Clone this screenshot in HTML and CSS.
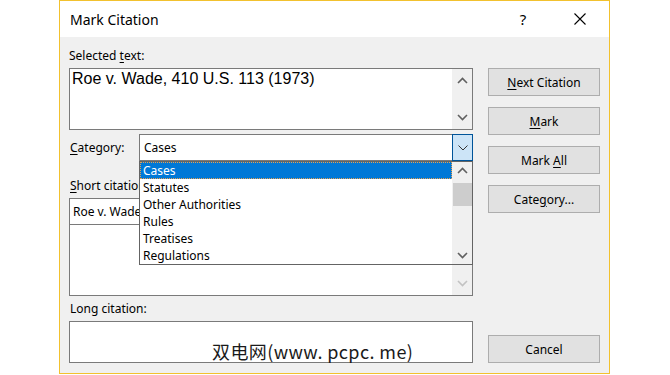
FILE: index.html
```html
<!DOCTYPE html>
<html lang="en">
<head>
  <meta charset="UTF-8" />
  <title>Mark Citation</title>
  <link rel="stylesheet" href="styles.css">
</head>
<body>
  <div class="dialog">
    <div class="titlebar">
      <span class="title">Mark Citation</span>
      <span class="help">?</span>
      <span class="close">
        <svg width="12" height="12" viewBox="0 0 12 12"><path d="M0.5 0.5 L11.5 11.5 M11.5 0.5 L0.5 11.5" stroke="#000" stroke-width="1.1" fill="none"/></svg>
      </span>
    </div>
    <div class="content">
      <div class="main">
        <div class="label">Selected <u>t</u>ext:</div>
        <div class="textbox selected">
          <div class="big-text">Roe v. Wade, 410 U.S. 113 (1973)</div>
          <div class="vscroll">
            <span class="arrow"><svg width="11" height="7" viewBox="0 0 11 7"><polyline points="1,6 5.5,1.5 10,6" stroke="#606060" stroke-width="1.6" fill="none"/></svg></span>
            <span class="arrow"><svg width="11" height="7" viewBox="0 0 11 7"><polyline points="1,1 5.5,5.5 10,1" stroke="#606060" stroke-width="1.6" fill="none"/></svg></span>
          </div>
        </div>

        <div class="category-row">
          <span class="label cat-label"><u>C</u>ategory:</span>
          <div class="combo">
            <span class="combo-value">Cases</span>
            <span class="combo-btn"><svg width="10" height="6" viewBox="0 0 10 6"><polyline points="0.5,0.5 5,5 9.5,0.5" stroke="#333" stroke-width="1" fill="none"/></svg></span>
            <div class="dropdown">
              <ul class="options">
                <li class="active">Cases</li>
                <li>Statutes</li>
                <li>Other Authorities</li>
                <li>Rules</li>
                <li>Treatises</li>
                <li>Regulations</li>
              </ul>
              <div class="vscroll list-scroll">
                <span class="arrow"><svg width="11" height="7" viewBox="0 0 11 7"><polyline points="1,6 5.5,1.5 10,6" stroke="#606060" stroke-width="1.6" fill="none"/></svg></span>
                <span class="thumb"></span>
                <span class="arrow"><svg width="11" height="7" viewBox="0 0 11 7"><polyline points="1,1 5.5,5.5 10,1" stroke="#606060" stroke-width="1.6" fill="none"/></svg></span>
              </div>
            </div>
          </div>
        </div>

        <div class="label short-label"><u>S</u>hort citation:</div>
        <div class="short-edit">Roe v. Wade, 410 U.S. 113 (1973)</div>
        <div class="short-list">
          <div class="list-body"></div>
          <div class="vscroll">
            <span class="arrow"><svg width="11" height="7" viewBox="0 0 11 7"><polyline points="1,1 5.5,5.5 10,1" stroke="#c2c2c2" stroke-width="1.6" fill="none"/></svg></span>
          </div>
        </div>

        <div class="label long-label">Long citation:</div>
        <div class="textbox long">
          <span class="watermark">双电网(www. pcpc. me)</span>
        </div>
      </div>

      <div class="buttons">
        <button><u>N</u>ext Citation</button>
        <button><u>M</u>ark</button>
        <button>Mark <u>A</u>ll</button>
        <button>Cate<u>g</u>ory...</button>
        <div class="spacer"></div>
        <button>Cancel</button>
      </div>
    </div>
  </div>
</body>
</html>
```

FILE: styles.css
```css
body {
  margin: 0;
  background: #fff;
  font-family: "Noto Sans", "Open Sans", sans-serif;
  font-size: 12px;
  color: #000;
}
.dialog {
  margin-left: 59px;
  width: 549px;
  height: 372px;
  border: 1px solid #f2c12e;
  display: flex;
  flex-direction: column;
}
.titlebar {
  height: 37px;
  background: #fff;
  display: flex;
  align-items: center;
}
.title {
  font-size: 14px;
  margin-left: 10px;
  flex: 1;
}
.help { font-size: 15px; width: 20px; margin-right: 41px; text-align: center; }
.close { width: 12px; margin-right: 23px; display: flex; }

.content {
  flex: 1;
  background: #f0f0f0;
  display: flex;
  gap: 15px;
  padding: 11px 9px 10px 9px;
}
.main {
  width: 404px;
  display: flex;
  flex-direction: column;
}
.label { line-height: 16px; height: 16px; }
u { text-decoration-thickness: 1px; text-underline-offset: 2px; }

.textbox {
  border: 1px solid #7a7a7a;
  background: #fff;
  box-sizing: border-box;
  margin-top: 4px;
}
.selected {
  height: 62px;
  display: flex;
}
.big-text {
  flex: 1;
  font-family: "Liberation Sans", Arial, sans-serif;
  font-size: 16px;
  line-height: 18px;
  padding: 1px 0 0 2px;
}
.vscroll {
  width: 20px;
  background: #f0f0f0;
  display: flex;
  flex-direction: column;
  justify-content: space-between;
  align-items: center;
}
.arrow {
  height: 17px;
  display: flex;
  align-items: center;
  justify-content: center;
}
.selected .vscroll { padding: 3px 0; }

.category-row {
  display: flex;
  align-items: center;
  margin-top: 4px;
  height: 27px;
}
.cat-label { width: 70px; flex-shrink: 0; box-sizing: border-box; line-height: 27px; height: 27px; padding-left: 1px; }
.combo {
  position: relative;
  flex: 1;
  height: 27px;
  box-sizing: border-box;
  border: 1px solid #7a7a7a;
  background: #fff;
  display: flex;
  align-items: center;
}
.combo-value { flex: 1; padding-left: 4px; }
.combo-btn {
  width: 19px;
  height: 25px;
  background: #cce4f7;
  border: 1px solid #005499;
  margin: -1px -1px -1px 0;
  display: flex;
  align-items: center;
  justify-content: center;
}
.dropdown {
  position: absolute;
  left: -1px;
  right: -1px;
  top: 26px;
  height: 104px;
  box-sizing: border-box;
  border: 1px solid #646464;
  background: #fff;
  display: flex;
  z-index: 2;
}
.options {
  list-style: none;
  margin: 0;
  padding: 0;
  flex: 1;
}
.options li {
  height: 17px;
  line-height: 17px;
  padding-left: 3px;
}
.options li.active {
  background: #0078d7;
  color: #fff;
  outline: 1px dotted #e8a050;
  outline-offset: -1px;
}
.list-scroll { justify-content: flex-start; }
.thumb {
  width: 19px;
  height: 23px;
  background: #cdcdcd;
  margin-top: 4px;
  margin-bottom: auto;
}

.short-label { margin-top: 17px; padding-left: 1px; }
.short-edit {
  margin-top: 4px;
  height: 27px;
  box-sizing: border-box;
  border: 1px solid #7a7a7a;
  background: #fff;
  line-height: 25px;
  padding-left: 3px;
  white-space: nowrap;
  overflow: hidden;
}
.short-list {
  margin-top: -1px;
  height: 72px;
  box-sizing: border-box;
  border: 1px solid #7a7a7a;
  background: #fff;
  display: flex;
}
.list-body { flex: 1; }
.short-list .vscroll { justify-content: flex-end; padding-bottom: 3px; }

.long-label { margin-top: 5px; padding-left: 1px; }
.long {
  height: 42px;
  display: flex;
  align-items: flex-end;
}
.watermark {
  font-family: "Noto Sans CJK SC", sans-serif;
  font-size: 18px;
  line-height: 22px;
  letter-spacing: 0.4px;
  padding-left: 142px;
  color: #1a1a1a;
}

.buttons {
  width: 112px;
  display: flex;
  flex-direction: column;
  gap: 11px;
  padding-top: 20px;
}
.buttons button {
  height: 28px;
  background: #e1e1e1;
  border: 1px solid #adadad;
  font-family: inherit;
  font-size: 12px;
  color: #000;
  padding: 0;
}
.spacer { flex: 1; }
```
